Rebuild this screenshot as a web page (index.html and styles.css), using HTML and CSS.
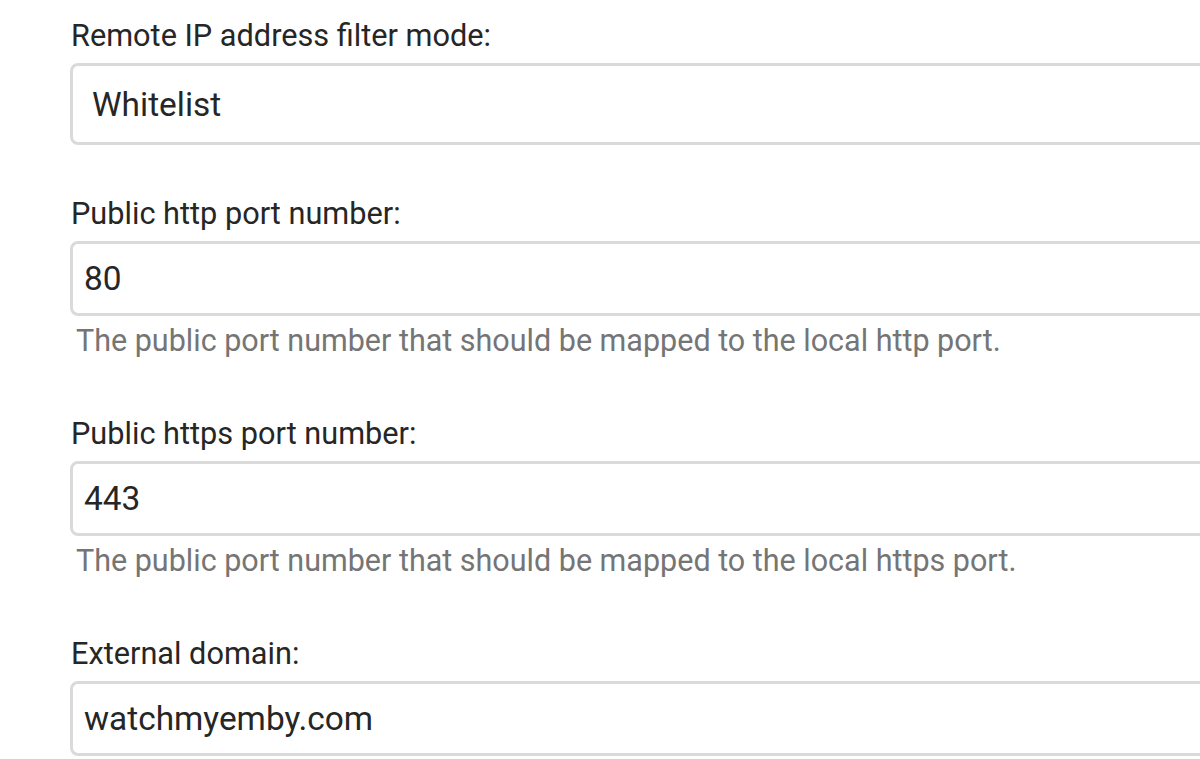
FILE: index.html
```html
<!DOCTYPE html>
<html>
<head>
<meta charset="utf-8">
<link rel="stylesheet" href="styles.css">
</head>
<body>
<form class="form">
  <div class="field field-select">
    <label class="field-label">Remote IP address filter mode:</label>
    <div class="select-box">Whitelist</div>
  </div>
  <div class="field">
    <label class="field-label">Public http port number:</label>
    <div class="input-box">80</div>
    <div class="field-help">The public port number that should be mapped to the local http port.</div>
  </div>
  <div class="field">
    <label class="field-label">Public https port number:</label>
    <div class="input-box">443</div>
    <div class="field-help">The public port number that should be mapped to the local https port.</div>
  </div>
  <div class="field">
    <label class="field-label">External domain:</label>
    <div class="input-box">watchmyemby.com</div>
  </div>
</form>
</body>
</html>
```
FILE: styles.css
```css
html, body {
  margin: 0;
  padding: 0;
  background: #ffffff;
  overflow: hidden;
}
body {
  font-family: Roboto, "Liberation Sans", sans-serif;
  color: #262626;
}
.form {
  display: flex;
  flex-direction: column;
  padding: 18px 0 0 70px;
  height: 759px;
  box-sizing: border-box;
  overflow: hidden;
}
.field {
  display: flex;
  flex-direction: column;
  margin-bottom: 57px;
}
.field:last-child {
  margin-bottom: 0;
}
.field-select {
  margin-bottom: 51px;
}
.field-label {
  display: block;
  font-size: 30.7px;
  line-height: 36px;
  margin: 0 0 9px 1px;
  color: #262626;
}
.select-box,
.input-box {
  box-sizing: border-box;
  border: 3px solid #dadada;
  border-radius: 8px;
  display: flex;
  align-items: center;
  font-size: 33.4px;
  color: #262626;
  margin-right: -20px;
}
.select-box {
  height: 82px;
  padding-left: 19px;
}
.input-box {
  height: 75px;
  padding-left: 11px;
}
.field-help {
  font-size: 30.5px;
  line-height: 36px;
  margin: 7px 0 0 6px;
  color: #757575;
}
```
